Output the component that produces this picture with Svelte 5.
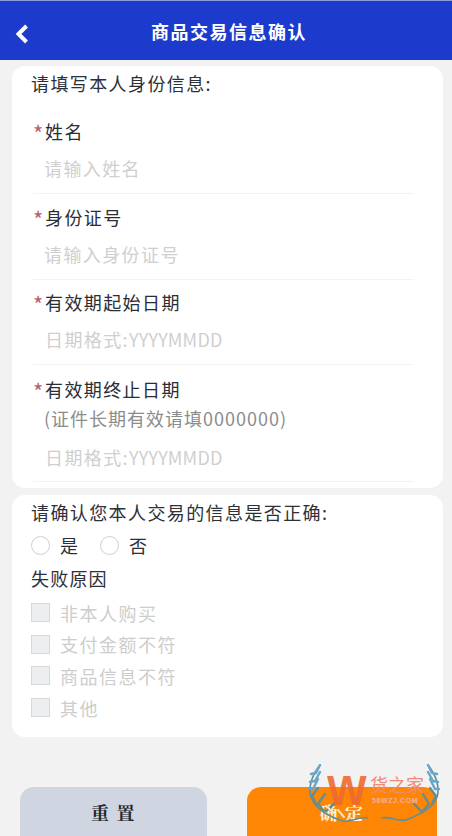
<script>
  const fields = [
    { label: '姓名', ph: '请输入姓名', cls: 'f1' },
    { label: '身份证号', ph: '请输入身份证号', cls: 'f2' },
    { label: '有效期起始日期', ph: '日期格式:', latin: 'YYYYMMDD', cls: 'f3 date' },
    { label: '有效期终止日期', note: '(证件长期有效请填0000000)', ph: '日期格式:', latin: 'YYYYMMDD', cls: 'f4 date' }
  ];
  const reasons = ['非本人购买', '支付金额不符', '商品信息不符', '其他'];
</script>

<div class="page">
  <header>
    <svg class="back" width="16" height="22" viewBox="0 0 16 22" aria-hidden="true">
      <path d="M12.5 3 L4.5 11 L12.5 19" fill="none" stroke="#fff" stroke-width="4" />
    </svg>
    <h1>商品交易信息确认</h1>
  </header>

  <section class="card one">
    <p class="title">请填写本人身份信息:</p>
    {#each fields as f}
      <div class="field {f.cls}">
        <div class="label"><span class="star">*</span>{f.label}</div>
        {#if f.note}<div class="note">{f.note}</div>{/if}
        <div class="input">{f.ph}{#if f.latin}<span class="latin">{f.latin}</span>{/if}</div>
      </div>
    {/each}
  </section>

  <section class="card two">
    <p class="title">请确认您本人交易的信息是否正确:</p>
    <div class="radios">
      <span class="radio"></span><span class="opt">是</span>
      <span class="radio"></span><span class="opt">否</span>
    </div>
    <p class="reason">失败原因</p>
    <div class="checks">
      {#each reasons as r}
        <div class="check"><span class="box"></span><span>{r}</span></div>
      {/each}
    </div>
  </section>

  <div class="actions">
    <button class="reset">重 置</button>
    <button class="ok">确 定</button>
  </div>

  <div class="mark" aria-hidden="true">
    <svg class="wreath" width="132" height="62" viewBox="0 0 132 62">
      <g fill="none" stroke-linecap="round" stroke-linejoin="round">
        <path d="M12 2 C4 12 0 24 3 34 C7 46 22 54 35 58 C43 60 50 53 59 55" stroke="#5f8f98" stroke-width="1.6" />
        <path d="M120 2 C128 12 132 24 129 34 C125 46 110 52 98 57 C90 59 82 53 74 55" stroke="#5f8f98" stroke-width="1.6" />
        <path d="M12 2 L8 10 L3 11 M12 9 L7 18 L2 19 M10 16 L5 26 L1 26" stroke="#6aa6c8" stroke-width="2.4" />
        <path d="M10 25 L4 33 L8 41 M17 31 L10 41 L16 48 M26 41 L18 48" stroke="#5f8f98" stroke-width="2.4" />
        <path d="M120 2 L124 10 L129 11 M120 9 L125 18 L130 19 M122 16 L127 26 L131 26" stroke="#6aa6c8" stroke-width="2.4" />
        <path d="M122 25 L128 33 L124 41 M115 31 L121 41 L115 48 M106 41 L113 48" stroke="#5f8f98" stroke-width="2.4" />
        <path d="M18 43 L26 50 M30 47 L36 54" stroke="#f3e6c8" stroke-width="2" />
      </g>
    </svg>
    <span class="w">W</span>
    <span class="hz">货之家</span>
    <span class="url">56WZJ.COM</span>
  </div>
</div>

<style>
  :global(body) { margin: 0; background: #f2f2f2; }
  .page {
    position: relative;
    width: 452px;
    height: 836px;
    overflow: hidden;
    background: #f2f2f2;
    font-family: "Noto Sans CJK SC", "Noto Sans", sans-serif;
    color: #2c3038;
  }
  header {
    height: 60px;
    background: #1c3acb;
    display: flex;
    align-items: center;
    justify-content: center;
    position: relative;
    border-top: 1px solid #8a9be2;
    box-sizing: border-box;
  }
  .back { position: absolute; left: 14px; top: 22px; }
  h1 {
    margin: 0 0 0 6px;
    color: #fff;
    font-size: 18px;
    font-weight: 700;
    letter-spacing: 1.5px;
  }
  .card {
    background: #fff;
    margin: 0 9px 0 12px;
    border-radius: 13px;
    box-sizing: border-box;
    padding: 0 19px;
  }
  .one { margin-top: 6px; height: 422px; }
  .two { margin-top: 7px; height: 242px; }
  p { margin: 0; }
  .title {
    font-size: 18px;
    line-height: 26px;
    letter-spacing: 1.4px;
    padding-top: 4px;
  }
  .field { margin-left: 2px; margin-right: 10px; }
  .f1 { margin-top: 22px; height: 86px; }
  .f2, .f3 { height: 85px; }
  .f4 { margin-top: 2px; }
  .label {
    font-size: 18px;
    line-height: 26px;
    letter-spacing: 1.4px;
    color: #2a2d33;
  }
  .star {
    color: #b8606e;
    display: inline-block;
    width: 12px;
    font-size: 22px;
    line-height: 20px;
    vertical-align: -3px;
  }
  .note {
    font-size: 18px;
    line-height: 29px;
    letter-spacing: 1px;
    color: #8c8c8c;
    margin-top: 2px;
    margin-left: 11px;
  }
  .input {
    margin-top: 8px;
    height: 42px;
    line-height: 32px;
    padding-left: 11px;
    font-size: 18px;
    letter-spacing: 1.4px;
    color: #cfcfcf;
    border-bottom: 1px solid #f3f3f3;
    box-sizing: border-box;
  }
  .date .input { padding-left: 12px; }
  .latin { letter-spacing: .15px; font-size: 18px; }
  .f4 .input { margin-top: 5px; height: 44px; line-height: 38px; }
  .radios {
    display: flex;
    align-items: center;
    margin-top: 7px;
    height: 26px;
    font-size: 18px;
  }
  .radio {
    width: 17px;
    height: 17px;
    border: 1px solid #cfcfcf;
    border-radius: 50%;
  }
  .opt { margin-left: 10px; margin-right: 22px; width: 18px; }
  .reason {
    margin-top: 7px;
    font-size: 18px;
    line-height: 26px;
    letter-spacing: 1.2px;
  }
  .checks { margin-top: 6px; }
  .check {
    display: flex;
    align-items: center;
    height: 31.6px;
    font-size: 18px;
    letter-spacing: 1.5px;
    color: #cdcdcd;
  }
  .box {
    width: 17px;
    height: 17px;
    background: #eceef2;
    border: 1px solid #d8d8d8;
    margin-right: 10px;
    flex: none;
  }
  .actions {
    display: flex;
    gap: 40px;
    padding: 50px 15px 0 20px;
  }
  button {
    border: 0;
    height: 70px;
    border-radius: 14px;
    font: 700 18px "Noto Serif CJK SC", "Noto Sans CJK SC", sans-serif;
    letter-spacing: 1.5px;
    padding: 0 0 21px;
    color: #26282e;
  }
  .reset { width: 187px; background: #d0d6e1; }
  .ok { width: 190px; background: #ff8505; color: #fff3dc; }
  .mark {
    position: absolute;
    left: 308px;
    top: 763px;
    width: 132px;
    height: 62px;
  }
  .wreath { position: absolute; left: 0; top: 0; }
  .w {
    position: absolute;
    left: 19px;
    top: 12px;
    font: 700 42px/32px "Liberation Sans", sans-serif;
    color: #ef6a32;
    opacity: .9;
  }
  .hz {
    position: absolute;
    left: 62px;
    top: 10px;
    font-size: 18px;
    line-height: 22px;
    color: #f08a78;
  }
  .url {
    position: absolute;
    left: 64px;
    top: 33px;
    font: 700 7px/9px "Liberation Sans", sans-serif;
    letter-spacing: .6px;
    color: #f4b0a0;
  }
</style>
